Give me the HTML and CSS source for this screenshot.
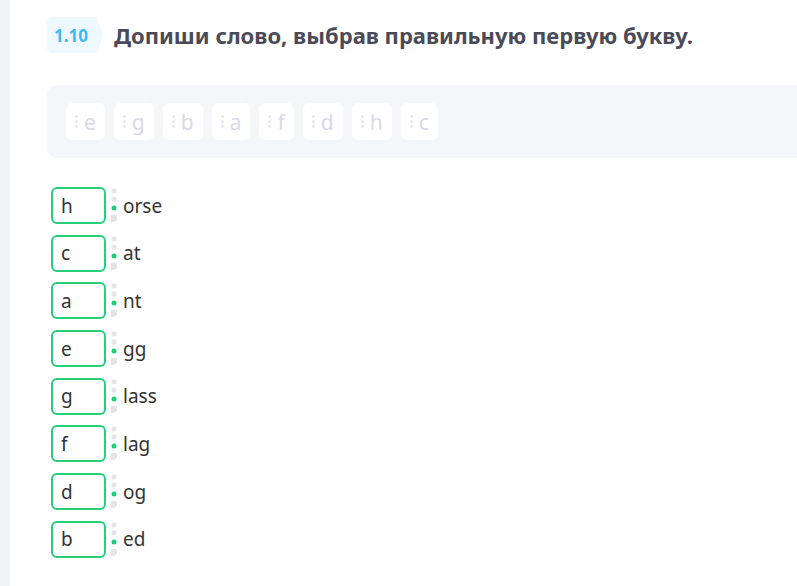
FILE: index.html
```html
<!DOCTYPE html>
<html lang="ru">
<head>
    <meta charset="UTF-8">
    <title>1.10</title>
    <link rel="stylesheet" href="styles.css">
</head>
<body>
    <div class="side-strip"></div>
    <div class="task">
        <div class="task-header">
            <span class="task-number">1.10</span>
            <h1 class="task-title">Допиши слово, выбрав правильную первую букву.</h1>
        </div>

        <div class="letter-bank">
            <div class="chip"><span class="grip"></span>e</div>
            <div class="chip"><span class="grip"></span>g</div>
            <div class="chip"><span class="grip"></span>b</div>
            <div class="chip"><span class="grip"></span>a</div>
            <div class="chip"><span class="grip"></span>f</div>
            <div class="chip"><span class="grip"></span>d</div>
            <div class="chip"><span class="grip"></span>h</div>
            <div class="chip"><span class="grip"></span>c</div>
        </div>

        <div class="word-list">
            <!-- rows filled below -->
        </div>
    </div>

    <script>
        const words = [
            ["h", "orse"], ["c", "at"], ["a", "nt"], ["e", "gg"],
            ["g", "lass"], ["f", "lag"], ["d", "og"], ["b", "ed"]
        ];
        const list = document.querySelector(".word-list");
        const connector =
            '<svg class="connector" width="8" height="37" viewBox="0 0 8 37">' +
            '<circle cx="4" cy="4" r="2.5" fill="#e3e3e8"/>' +
            '<circle cx="4" cy="12" r="2.5" fill="#e3e3e8"/>' +
            '<circle cx="4" cy="21" r="2.5" fill="#1fcf78"/>' +
            '<path d="M1 28h6v5l-3 2h-3z" fill="#e3e3e8"/>' +
            '</svg>';
        words.forEach(([letter, rest]) => {
            const row = document.createElement("div");
            row.className = "word-row";
            row.innerHTML = `<div class="drop-box">${letter}</div>${connector}<span class="word-rest">${rest}</span>`;
            list.appendChild(row);
        });
    </script>
</body>
</html>
```

FILE: styles.css
```css
body {
    margin: 0;
    font-family: "Noto Sans", "Open Sans", sans-serif;
    background-color: #fff;
    color: #333;
    display: flex;
    min-height: 586px;
}

.side-strip {
    width: 10px;
    flex-shrink: 0;
    background-color: #f2f3f7;
}

.task {
    flex: 1;
    padding: 17px 0 0 37px;
    overflow: hidden;
}

.task-header {
    display: flex;
    align-items: center;
    gap: 11px;
}

.task-number {
    display: flex;
    align-items: center;
    height: 36px;
    width: 56px;
    box-sizing: border-box;
    padding-left: 7px;
    background-color: #eef9ff;
    border-radius: 5px 0 0 5px;
    clip-path: polygon(0 0, 50px 0, 56px 50%, 50px 100%, 0 100%);
    color: #3cb9f7;
    font-size: 17px;
    font-weight: 700;
}

.task-title {
    margin: 0;
    font-size: 22px;
    font-weight: 700;
    color: #4a4a58;
}

.letter-bank {
    margin-top: 32px;
    margin-right: -20px;
    padding: 18px 19px;
    background-color: #f5f6fa;
    border-radius: 10px 0 0 10px;
    display: flex;
    gap: 9px;
}

.chip {
    height: 37px;
    display: flex;
    align-items: center;
    gap: 6px;
    padding: 0 9px;
    background-color: #fff;
    border-radius: 6px;
    color: #d9d9ea;
    font-size: 21px;
}

.grip {
    width: 3px;
    height: 15px;
    background-image: radial-gradient(circle, #e6e6ee 1.2px, transparent 1.5px);
    background-size: 3px 5px;
}

.word-list {
    margin-top: 29px;
    padding-left: 4px;
    display: flex;
    flex-direction: column;
    gap: 10.7px;
}

.word-row {
    display: flex;
    align-items: center;
    height: 37px;
}

.drop-box {
    width: 55px;
    height: 37px;
    box-sizing: border-box;
    border: 2px solid #25d07a;
    border-radius: 6px;
    padding-left: 8px;
    display: flex;
    align-items: center;
    font-size: 19px;
    color: #333;
}

.connector {
    margin-left: 4px;
    margin-right: 5px;
}

.word-rest {
    font-size: 19px;
    color: #333;
}
```
